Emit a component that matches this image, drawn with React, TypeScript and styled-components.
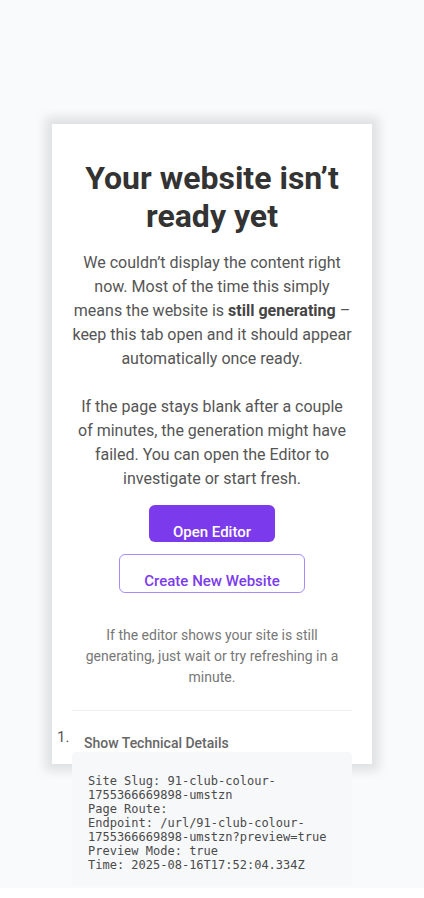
import styled, { createGlobalStyle } from 'styled-components'

const GlobalStyle = createGlobalStyle`
  html, body {
    margin: 0;
    padding: 0;
    background: #ffffff;
  }
  body {
    font-family: Roboto, "Liberation Sans", sans-serif;
  }
`

const Page = styled.div`
  height: 888px;
  background: #f9fafb;
  padding-top: 124px;
  box-sizing: border-box;
  display: flex;
  justify-content: center;
  align-items: flex-start;
`

const Card = styled.div`
  width: 320px;
  height: 640px;
  box-sizing: border-box;
  background: #ffffff;
  padding: 35px 20px 0;
  box-shadow: 0 0 10px 7px rgba(0, 0, 0, 0.1);
  text-align: center;
`

const Title = styled.h1`
  margin: 0 0 16px;
  font-size: 32px;
  line-height: 38px;
  font-weight: 700;
  color: #333333;
`

const Lead = styled.p`
  margin: 0 0 14px;
  font-size: 16px;
  line-height: 24px;
  color: #555555;
  strong {
    color: #444444;
    font-weight: 700;
  }
`

const Actions = styled.div`
  display: flex;
  flex-direction: column;
  align-items: center;
  gap: 12px;
`

const Button = styled.button<{ $outline?: boolean }>`
  font-family: Roboto, "Liberation Sans", sans-serif;
  font-size: 15px;
  line-height: 18px;
  font-weight: 500;
  border-radius: 6px;
  cursor: pointer;
  box-sizing: border-box;
  padding: ${p => (p.$outline ? '17px 24px 2px' : '18px 24px 1px')};
  background: ${p => (p.$outline ? '#ffffff' : '#7c3aed')};
  color: ${p => (p.$outline ? '#7c3aed' : '#ffffff')};
  border: ${p => (p.$outline ? '1px solid #a78bfa' : 'none')};
`

const Note = styled.p`
  margin: 32px 0 0;
  font-size: 14px;
  line-height: 21px;
  color: #777777;
`

const Divider = styled.hr`
  margin: 22px 0 0;
  border: none;
  border-top: 1px solid #eeeeee;
`

const DetailsRow = styled.div`
  display: flex;
  align-items: flex-start;
  margin-top: 18px;
  text-align: left;
`

const Marker = styled.span`
  width: 27px;
  margin-left: -15px;
  font-size: 15px;
  line-height: 16px;
  color: #555555;
`

const Summary = styled.div`
  padding: 6px 0 1px;
  font-size: 14px;
  line-height: 16px;
  font-weight: 500;
  color: #666666;
`

const Code = styled.pre`
  margin: 0;
  padding: 22px 16px 14px;
  background: #f7f8fa;
  border-radius: 4px;
  text-align: left;
  font-family: "DejaVu Sans Mono", monospace;
  font-size: 12px;
  line-height: 14px;
  color: #4a4a4a;
  white-space: pre-wrap;
`

const details = [
  'Site Slug: 91-club-colour-1755366669898-umstzn',
  'Page Route: ',
  'Endpoint: /url/91-club-colour-1755366669898-umstzn?preview=true',
  'Preview Mode: true',
  'Time: 2025-08-16T17:52:04.334Z',
]

export default function App() {
  return (
    <>
      <GlobalStyle />
      <Page>
        <Card>
          <Title>Your website isn’t ready yet</Title>
          <Lead>
            We couldn’t display the content right now. Most of the time this simply means the website is{' '}
            <strong>still generating</strong> – keep this tab open and it should appear automatically once ready.
            <br />
            <br />
            If the page stays blank after a couple of minutes, the generation might have failed. You can open the
            Editor to investigate or start fresh.
          </Lead>
          <Actions>
            <Button>Open Editor</Button>
            <Button $outline>Create New Website</Button>
          </Actions>
          <Note>If the editor shows your site is still generating, just wait or try refreshing in a minute.</Note>
          <Divider />
          <DetailsRow>
            <Marker>1.</Marker>
            <Summary>Show Technical Details</Summary>
          </DetailsRow>
          <Code>{details.join('\n')}</Code>
        </Card>
      </Page>
    </>
  )
}
